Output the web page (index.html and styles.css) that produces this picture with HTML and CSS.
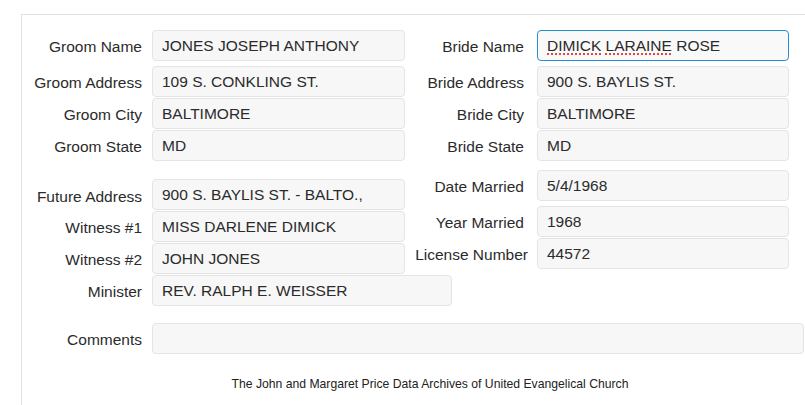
FILE: index.html
```html
<!DOCTYPE html>
<html lang="en">
<head>
<meta charset="utf-8">
<title>Marriage Record</title>
<link rel="stylesheet" href="styles.css">
</head>
<body>
<div class="panel">
  <div class="block block-top">
    <div class="col col-left">
      <div class="row row-first"><span class="label">Groom Name</span><div class="field">JONES JOSEPH ANTHONY</div></div>
      <div class="row"><span class="label">Groom Address</span><div class="field">109 S. CONKLING ST.</div></div>
      <div class="row"><span class="label">Groom City</span><div class="field">BALTIMORE</div></div>
      <div class="row"><span class="label">Groom State</span><div class="field">MD</div></div>
    </div>
    <div class="col col-right">
      <div class="row row-first"><span class="label">Bride Name</span><div class="field focused"><span class="spell">DIMICK</span>&nbsp;<span class="spell">LARAINE</span>&nbsp;ROSE</div></div>
      <div class="row"><span class="label">Bride Address</span><div class="field">900 S. BAYLIS ST.</div></div>
      <div class="row"><span class="label">Bride City</span><div class="field">BALTIMORE</div></div>
      <div class="row"><span class="label">Bride State</span><div class="field">MD</div></div>
    </div>
  </div>
  <div class="block block-mid">
    <div class="col col-left col-mid-left">
      <div class="row"><span class="label label-low">Future Address</span><div class="field">900 S. BAYLIS ST. - BALTO.,</div></div>
      <div class="row"><span class="label">Witness #1</span><div class="field">MISS DARLENE DIMICK</div></div>
      <div class="row"><span class="label">Witness #2</span><div class="field">JOHN JONES</div></div>
      <div class="row"><span class="label">Minister</span><div class="field field-wide">REV. RALPH E. WEISSER</div></div>
    </div>
    <div class="col col-right col-mid-right">
      <div class="row row-first"><span class="label">Date Married</span><div class="field">5/4/1968</div></div>
      <div class="row"><span class="label">Year Married</span><div class="field">1968</div></div>
      <div class="row"><span class="label label-long">License Number</span><div class="field">44572</div></div>
    </div>
  </div>
  <div class="row row-comments"><span class="label">Comments</span><div class="field field-comments"></div></div>
  <p class="footer">The John and Margaret Price Data Archives of United Evangelical Church</p>
</div>
</body>
</html>
```

FILE: styles.css
```css
html, body {
  margin: 0;
  padding: 0;
  background: #ffffff;
  overflow: hidden;
}

body {
  font-family: "Liberation Sans", Arial, sans-serif;
  font-size: 15.5px;
  color: #2b2b2b;
}

.panel {
  margin: 14px 0 0 21px;
  width: 816px;
  border-top: 1px solid #e3e3e3;
  border-left: 1px solid #e3e3e3;
  padding-top: 15px;
  height: 400px;
  box-sizing: border-box;
}

.block {
  display: flex;
}

.col {
  display: flex;
  flex-direction: column;
  gap: 1px;
  flex-shrink: 0;
}

.col-left {
  width: 383px;
}

.col-right {
  width: 384px;
}

.row {
  display: flex;
  align-items: center;
}

.row-first {
  margin-bottom: 4px;
}

.label {
  flex-shrink: 0;
  text-align: right;
  white-space: nowrap;
  padding-top: 2px;
}

.label-low {
  padding-top: 5px;
}

.col-left .label {
  width: 120px;
  margin-right: 10px;
}

.col-right .label {
  width: 119px;
  margin-right: 13px;
}

.col-right .label-long {
  width: 123px;
  margin-right: 9px;
}

.field {
  flex-shrink: 0;
  box-sizing: border-box;
  height: 31px;
  width: 253px;
  padding: 0 9px;
  display: flex;
  align-items: center;
  background: #f7f7f7;
  border: 1px solid #e4e4e4;
  border-radius: 4px;
  white-space: nowrap;
}

.col-right .field {
  width: 252px;
}

.field.focused {
  border-color: #2590d1;
  background: #f9f9f9;
}

.spell {
  text-decoration: underline dotted #e01010;
  text-underline-offset: 3px;
}

.col-left .field-wide {
  width: 300px;
}

.block-mid {
  margin-top: 9px;
}

.col-mid-left {
  margin-top: 9px;
}

.row-comments {
  margin-top: 17px;
}

.row-comments .label {
  width: 120px;
  margin-right: 10px;
}

.field-comments {
  width: 652px;
}

.footer {
  margin: 23px 0 0;
  width: 816px;
  text-align: center;
  font-size: 12.2px;
  color: #222222;
}
```
